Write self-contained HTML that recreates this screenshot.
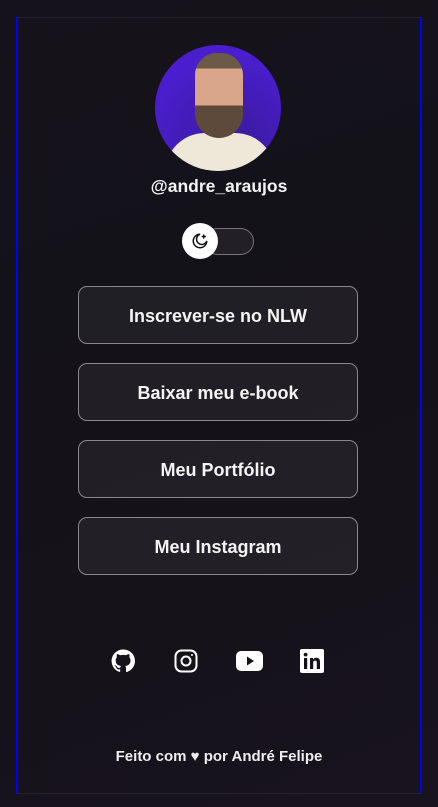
<!DOCTYPE html>
<html><head><meta charset="utf-8"><style>
*{margin:0;padding:0;box-sizing:border-box}
body{width:438px;height:807px;background:linear-gradient(160deg,#15121b,#141218 50%,#18131d);font-family:"Liberation Sans",sans-serif;color:#f2f2f2;position:relative;overflow:hidden}
.box{position:absolute;left:16px;top:17px;width:406px;height:777px;border:1px solid #26222c;border-left:2px solid #0000ff;border-right:2px solid #0000ff}
.av{position:absolute;left:155px;top:45px;width:126px;height:126px;border-radius:50%;background:radial-gradient(circle at 60% 75%,#3a1a9a,#4a1ecf 70%);overflow:hidden}
.face{position:absolute;left:40px;top:8px;width:48px;height:85px;border-radius:22px 22px 24px 24px;background:linear-gradient(#6b5a45 0 18%,#d9a68a 18% 62%,#5e4a3a 62%)}
.shirt{position:absolute;left:10px;top:88px;width:110px;height:50px;border-radius:40px 40px 0 0;background:#eee8d8}
.user{position:absolute;top:176px;width:100%;text-align:center;font-size:17.5px;font-weight:bold}
.track{position:absolute;left:204px;top:228px;width:50px;height:27px;border:1px solid #777;border-radius:14px;background:#221f27}
.knob{position:absolute;left:182px;top:223px;width:36px;height:36px;border-radius:50%;background:#fff;display:flex;align-items:center;justify-content:center}
.btn{position:absolute;left:78px;width:280px;height:58px;border:1px solid #8a8790;border-radius:9px;background:rgba(255,255,255,0.06);display:flex;align-items:center;justify-content:center;font-size:18px;font-weight:bold;color:#f4f4f4;padding-top:3px}
.ic{position:absolute;top:649px}
.foot{position:absolute;top:748px;width:100%;text-align:center;font-size:15px;font-weight:bold;color:#eee}
</style></head><body>
<div class="box"></div>
<div class="av"><div class="shirt"></div><div class="face"></div></div>
<div class="user">@andre_araujos</div>
<div class="track"></div>
<div class="knob"><svg width="18" height="18" viewBox="0 0 24 24" fill="none" stroke="#111" stroke-width="2" stroke-linecap="round"><path d="M12 3a7 7 0 1 0 9 9A9 9 0 1 1 12 3z"/><path d="M17 4v4M15 6h4"/></svg></div>
<div class="btn" style="top:286px">Inscrever-se no NLW</div>
<div class="btn" style="top:363px">Baixar meu e-book</div>
<div class="btn" style="top:440px">Meu Portfólio</div>
<div class="btn" style="top:517px">Meu Instagram</div>
<svg class="ic" style="left:111px" width="24" height="24" viewBox="0 0 24 24" fill="#fff"><path d="M12 .5a11.5 11.5 0 0 0-3.6 22.4c.6.1.8-.3.8-.6v-2c-3.2.7-3.900-1.5-3.9-1.5-.5-1.3-1.300-1.7-1.3-1.7-1-.7.1-.7.1-.7 1.2.1 1.8 1.2 1.8 1.2 1 1.8 2.7 1.3 3.4 1 .1-.8.4-1.3.7-1.6-2.6-.3-5.3-1.3-5.3-5.7 0-1.3.5-2.3 1.2-3.1-.1-.3-.5-1.5.1-3.1 0 0 1-.3 3.2 1.2a11 11 0 0 1 5.8 0c2.2-1.5 3.2-1.2 3.2-1.2.6 1.6.2 2.8.1 3.1.8.8 1.2 1.8 1.2 3.1 0 4.4-2.7 5.4-5.3 5.7.4.4.8 1.1.8 2.2v3.2c0 .3.2.7.8.6A11.5 11.5 0 0 0 12 .5z"/></svg>
<svg class="ic" style="left:174px" width="24" height="24" viewBox="0 0 24 24" fill="none" stroke="#fff" stroke-width="2"><rect x="1.5" y="1.5" width="21" height="21" rx="6"/><circle cx="12" cy="12" r="4.5"/><circle cx="18" cy="6" r="1" fill="#fff" stroke="none"/></svg>
<svg class="ic" style="left:236px" width="27" height="24" viewBox="0 0 27 24"><rect x="0" y="2" width="27" height="20" rx="5" fill="#fff"/><path d="M11 7.5v9l7-4.5z" fill="#141218"/></svg>
<svg class="ic" style="left:300px" width="24" height="24" viewBox="0 0 24 24"><rect width="24" height="24" rx="2" fill="#fff"/><rect x="4" y="9" width="3.2" height="11" fill="#141218"/><circle cx="5.6" cy="5.6" r="1.9" fill="#141218"/><path d="M10 9h3v1.5c.6-1 1.8-1.8 3.4-1.8 3 0 3.6 2 3.6 4.6V20h-3.2v-5.8c0-1.4-.3-2.6-1.7-2.6s-1.9 1.1-1.9 2.6V20H10z" fill="#141218"/></svg>
<div class="foot">Feito com ♥ por André Felipe</div>
</body></html>
